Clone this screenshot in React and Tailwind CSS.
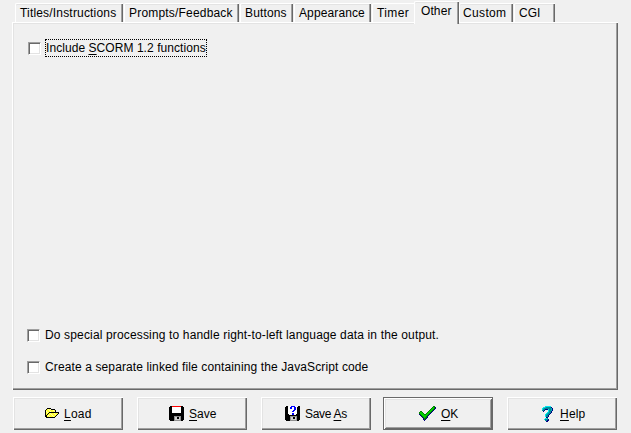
import React from 'react';

const COLORS = {
  k: '#000000', y: '#ffff33', Y: '#ffffb0', w: '#ffffff', r: '#ff0000', g: '#d0d0d0',
  d: '#909090', b: '#0000ff', n: '#000080', G: '#008000', L: '#00d000',
  c: '#00e8f0', C: '#00b8c0', t: '#008c98',
};

function PixelIcon({ rows, className }) {
  return (
    <svg className={'shrink-0 ' + className} width={rows[0].length} height={rows.length} shapeRendering="crispEdges" aria-hidden="true">
      {rows.flatMap((row, y) =>
        [...row].map((ch, x) =>
          COLORS[ch] ? <rect key={x + '-' + y} x={x} y={y} width="1" height="1" fill={COLORS[ch]} /> : null
        )
      )}
    </svg>
  );
}

const FOLDER = [
  '..kkkk........',
  '.kyYyYkkkk....',
  'kyyyYyyyYyk...',
  'kYyyyYyyyYk...',
  'kyYykkkkkkkkkk',
  'kyykyYyyyYyyyk',
  'kykyyyYyyyYyk.',
  'kkyYyyyYyyyk..',
  'kkyyYyyyYyk...',
  '.kkkkkkkkk....',
];

const DISK = [
  '.kkrrrrrrrrrkk.',
  'kkkwwwwwwwwwkkk',
  'kkkwwwwwwwwwkkk',
  'kkkwwwwwwwwwkkk',
  'kkkwwwwwwwwwkkk',
  'kkkwwwwwwwwwkkk',
  'kkkwwwwwwwwwkkk',
  'kkkkkkkkkkkkkkk',
  'kkkkkkkkkkkkkkk',
  'kkkkkkkkkkkkkkk',
  'kkkkkdddddddkkk',
  'kkkkkdggkkgdkkk',
  'kkkkkdggkkgdkkk',
  'kkkkkdgggggdkkk',
  '.kkkkdddddddkk.',
];

const DISK_AS = [
  '.kk.wwbbbbww.kk',
  'kkkwwbbwwbbwkkk',
  'kkkwwbbwwbbwkkk',
  'kkkwwwwwwbbwkkk',
  'kkkwwwwwbbwwkkk',
  'kkkwwwwbbwwwkkk',
  'kkkwwwwwwwwwkkk',
  'kkkwwwwbbwwwkkk',
  'kkkkwwwbbwwkkkk',
  'kkkkkkkkkkkkkkk',
  'kkkkkdddddddkkk',
  'kkkkkdggkkgdkkk',
  'kkkkkdggkkgdkkk',
  'kkkkkdgggggdkkk',
  '.kkkkdddddddkk.',
];

const CHECK = [
  '..............GG.',
  '.............GLGn',
  '............GLLGn',
  '...........GLLGn.',
  '..........GLLGn..',
  '.GG......GLLGn...',
  'GLLG....GLLGn....',
  'GLLLG..GLLGn.....',
  'nGLLLGGLLGn......',
  '.nGLLLLLGn.......',
  '..nGLLLGn........',
  '...nGLGGn........',
  '....nGGn.........',
  '....nGn..........',
  '.....n...........',
];

const QUESTION = [
  '...cccccc..',
  '.ccCtttttn.',
  'cCtttttttCn',
  'cttnnncttCn',
  'ttn...cttCn',
  '.n....cttn.',
  '.....cCttn.',
  '....cCttn..',
  '...cCttn...',
  '...cttn....',
  '...cttn....',
  '....nn.....',
  '...cct.....',
  '..ctttn....',
  '...ttnn....',
  '....nn.....',
];

const RAISED = 'border-t border-l border-white shadow-[inset_-1px_-1px_#696969,inset_-2px_-2px_#a0a0a0,inset_1px_1px_#e3e3e3]';
const EDGE = 'shadow-[inset_-1px_0_#696969,inset_-2px_0_#a0a0a0,inset_0_1px_#e3e3e3]';

function Tab({ className, children }) {
  return (
    <div className={'shrink-0 whitespace-nowrap rounded-tl-[2px] border-t border-l border-white pt-[2px] ' + className}>
      {children}
    </div>
  );
}

function CheckRow({ className, children }) {
  return (
    <label className={'flex items-center ' + className}>
      <span className="h-[13px] w-[13px] shrink-0 border border-t-[#a0a0a0] border-l-[#a0a0a0] border-r-white border-b-white bg-white shadow-[inset_1px_1px_#696969,inset_-1px_-1px_#e3e3e3]" />
      {children}
    </label>
  );
}

function Button({ className, icon, children }) {
  return (
    <button className={'flex h-[33px] w-[110px] shrink-0 items-start whitespace-nowrap ' + className}>
      {icon}
      {children}
    </button>
  );
}

function Key({ children }) {
  return <span className="underline underline-offset-2">{children}</span>;
}

export default function App() {
  return (
    <div className="flex h-[433px] w-[631px] flex-col overflow-hidden bg-[#f0f0f0] font-['Liberation_Sans',Arial,sans-serif] text-[12px] leading-[14px] text-black">
      <div className="relative z-10 flex h-[22px] shrink-0 items-end pl-[15px]">
        <Tab className={'h-[19px] w-[108px] pl-[4px] tracking-[0.18px] ' + EDGE}>Titles/Instructions</Tab>
        <Tab className={'ml-px h-[19px] w-[115px] pl-[4px] tracking-[0.19px] ' + EDGE}>Prompts/Feedback</Tab>
        <Tab className={'ml-px h-[19px] w-[53px] pl-[4px] tracking-[0.15px] ' + EDGE}>Buttons</Tab>
        <Tab className={'ml-px h-[19px] w-[77px] pl-[4px] tracking-[0.12px] ' + EDGE}>Appearance</Tab>
        <Tab className="ml-px h-[19px] w-[42px] pl-[4px] tracking-[0.4px]">Timer</Tab>
        <Tab className={'-mb-[2px] h-[23px] w-[45px] bg-[#f0f0f0] pl-[6px] tracking-[0.1px] ' + EDGE}>Other</Tab>
        <Tab className={'h-[19px] w-[54px] pl-[3px] tracking-[0.35px] ' + EDGE}>Custom</Tab>
        <Tab className={'ml-px h-[19px] w-[41px] pl-[4px] ' + EDGE}>CGI</Tab>
      </div>

      <main className={'ml-[12px] flex h-[368px] w-[606px] shrink-0 flex-col pl-[14px] ' + RAISED}>
        <CheckRow className="mt-[16px] ml-px h-[18px]">
          <span className="ml-[4px] h-[18px] w-[162px] whitespace-nowrap border border-dotted border-black leading-[16px] tracking-[0.06px]">
            Include <Key>S</Key>CORM 1.2 functions
          </span>
        </CheckRow>
        <CheckRow className="mt-[271px] h-[14px]">
          <span className="ml-[5px] whitespace-nowrap tracking-[0.15px]">Do special processing to handle right-to-left language data in the output.</span>
        </CheckRow>
        <CheckRow className="mt-[18px] h-[14px]">
          <span className="ml-[5px] whitespace-nowrap tracking-[0.12px]">Create a separate linked file containing the JavaScript code</span>
        </CheckRow>
      </main>

      <footer className="mt-[7px] flex pl-[13px]">
        <Button className={RAISED} icon={<PixelIcon rows={FOLDER} className="mt-[10px] ml-[31px]" />}>
          <span className="mt-[9px] ml-[5px] tracking-[0.25px]"><Key>L</Key>oad</span>
        </Button>
        <Button className={'ml-[14px] ' + RAISED} icon={<PixelIcon rows={DISK} className="mt-[8px] ml-[31px]" />}>
          <span className="mt-[9px] ml-[5px]"><Key>S</Key>ave</span>
        </Button>
        <Button className={'ml-[14px] ' + RAISED} icon={<PixelIcon rows={DISK_AS} className="mt-[8px] ml-[23px]" />}>
          <span className="mt-[9px] ml-[5px] tracking-[-0.3px]">Save <Key>A</Key>s</span>
        </Button>
        <Button
          className="ml-[12px] border border-[#696969] shadow-[inset_1px_1px_#fff,inset_-1px_-1px_#696969,inset_2px_2px_#e3e3e3,inset_-2px_-2px_#a0a0a0]"
          icon={<PixelIcon rows={CHECK} className="mt-[8px] ml-[35px]" />}
        >
          <span className="mt-[9px] ml-[5px]"><Key>O</Key>K</span>
        </Button>
        <Button className={'ml-[14px] ' + RAISED} icon={<PixelIcon rows={QUESTION} className="mt-[8px] ml-[34px]" />}>
          <span className="mt-[9px] ml-[7px] tracking-[0.2px]"><Key>H</Key>elp</span>
        </Button>
      </footer>
    </div>
  );
}
